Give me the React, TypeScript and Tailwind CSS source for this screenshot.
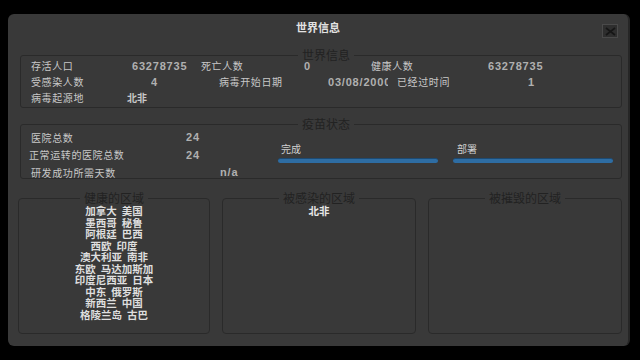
import React from "react";

const cjk = { fontFamily: '"Noto Sans CJK SC", "Noto Sans", sans-serif' };
const latin = { fontFamily: '"Liberation Sans", Arial, sans-serif' };

const healthy = [
  "加拿大  美国",
  "墨西哥  秘鲁",
  "阿根廷  巴西",
  "西欧  印度",
  "澳大利亚  南非",
  "东欧  马达加斯加",
  "印度尼西亚  日本",
  "中东  俄罗斯",
  "新西兰  中国",
  "格陵兰岛  古巴",
];

const Label: React.FC<{ w: string; children: React.ReactNode }> = ({ w, children }) => (
  <span
    className={`${w} shrink-0 whitespace-nowrap text-[10px] tracking-[0.6px] text-[#c8c8c8] leading-none`}
    style={cjk}
  >
    {children}
  </span>
);

const Value: React.FC<{ w: string; children: React.ReactNode }> = ({ w, children }) => (
  <span
    className={`${w} shrink-0 overflow-hidden whitespace-nowrap text-[11px] font-bold tracking-[0.8px] text-[#b0b0b0] leading-none`}
    style={latin}
  >
    {children}
  </span>
);

const Legend: React.FC<{ children: React.ReactNode }> = ({ children }) => (
  <legend className="mx-auto px-1 text-[12px] leading-none text-[#222222]" style={cjk}>
    {children}
  </legend>
);

export default function App() {
  return (
    <div className="w-[640px] h-[360px] bg-black pt-[14px] pl-[8px] overflow-hidden">
      <div className="w-[622px] h-[332px] bg-[#393939] rounded-md border-r-2 border-[#262626] flex flex-col">
        {/* header */}
        <div className="relative h-[26px] flex items-center justify-center">
          <span className="text-[11px] font-bold text-[#e2e2e2] leading-none" style={cjk}>
            世界信息
          </span>
          <div className="absolute right-[10px] top-[10px] w-[16px] h-[14px] bg-[#2e2e2e] border border-[#4a4a4a] flex items-center justify-center">
            <svg width="11" height="9" viewBox="0 0 11 9">
              <path d="M1 1 L10 8 M10 1 L1 8" stroke="#161616" strokeWidth="1.6" />
            </svg>
          </div>
        </div>

        {/* world info */}
        <fieldset className="ml-[12px] mr-[6px] mt-[9px] h-[59px] border border-[#2a2a2a] rounded-[3px] pl-[10px]">
          <Legend>世界信息</Legend>
          <div className="flex items-center h-[16px] -mt-[3px]">
            <Label w="w-[101px]">存活人口</Label>
            <Value w="w-[60px]">63278735</Value>
            <span className="w-[9px]" />
            <Label w="w-[103px]">死亡人数</Label>
            <Value w="w-[67px]">0</Value>
            <Label w="w-[117px]">健康人数</Label>
            <Value w="w-[60px]">63278735</Value>
          </div>
          <div className="flex items-center h-[16px]">
            <Label w="w-[120px]">受感染人数</Label>
            <Value w="w-[68px]">4</Value>
            <Label w="w-[109px]">病毒开始日期</Label>
            <Value w="w-[60px]">03/08/2000</Value>
            <span className="w-[9px]" />
            <Label w="w-[131px]">已经过时间</Label>
            <Value w="w-[20px]">1</Value>
          </div>
          <div className="flex items-center h-[16px]">
            <Label w="w-[96px]">病毒起源地</Label>
            <span className="text-[10px] font-bold text-[#c8c8c8] leading-none" style={cjk}>北非</span>
          </div>
        </fieldset>

        {/* vaccine status */}
        <fieldset className="ml-[12px] mr-[6px] mt-[10px] h-[61px] border border-[#2a2a2a] rounded-[3px] pl-[10px]">
          <Legend>疫苗状态</Legend>
          <div className="flex">
            <div className="w-[247px] flex flex-col -mt-[1px]">
              <div className="flex items-center h-[17px]">
                <Label w="w-[155px]">医院总数</Label>
                <Value w="w-[30px]">24</Value>
              </div>
              <div className="flex items-center h-[18px] -ml-[2px]">
                <Label w="w-[157px]">正常运转的医院总数</Label>
                <Value w="w-[30px]">24</Value>
              </div>
              <div className="flex items-center h-[17px]">
                <Label w="w-[189px]">研发成功所需天数</Label>
                <Value w="w-[30px]">n/a</Value>
              </div>
            </div>
            <div className="flex gap-[15px] pt-[14px]">
              <div className="w-[160px] flex flex-col">
                <span className="text-[10px] text-[#d0d0d0] leading-none pl-[3px]" style={cjk}>完成</span>
                <div className="mt-[4px] h-[5px] rounded-full bg-[#2e6da3] border-t border-[#1d4a72]" />
              </div>
              <div className="w-[160px] flex flex-col">
                <span className="text-[10px] text-[#d0d0d0] leading-none pl-[4px]" style={cjk}>部署</span>
                <div className="mt-[4px] h-[5px] rounded-full bg-[#2e6da3] border-t border-[#1d4a72]" />
              </div>
            </div>
          </div>
        </fieldset>

        {/* regions */}
        <div className="flex gap-[12px] ml-[10px] mt-[13px]">
          <fieldset className="w-[192px] h-[142px] border border-[#2a2a2a] rounded-[4px]">
            <Legend>健康的区域</Legend>
            <div className="flex flex-col items-center pt-[1px]">
              {healthy.map((line) => (
                <span
                  key={line}
                  className="text-[10.5px] font-bold text-[#dedede] leading-[11.5px] whitespace-pre"
                  style={cjk}
                >
                  {line}
                </span>
              ))}
            </div>
          </fieldset>
          <fieldset className="w-[194px] h-[142px] border border-[#2a2a2a] rounded-[4px]">
            <Legend>被感染的区域</Legend>
            <div className="flex flex-col items-center pt-[1px]">
              <span className="text-[10.5px] font-bold text-[#e6e6e6] leading-[11.5px]" style={cjk}>北非</span>
            </div>
          </fieldset>
          <fieldset className="w-[194px] h-[142px] border border-[#2a2a2a] rounded-[4px]">
            <Legend>被摧毁的区域</Legend>
          </fieldset>
        </div>
      </div>
    </div>
  );
}
